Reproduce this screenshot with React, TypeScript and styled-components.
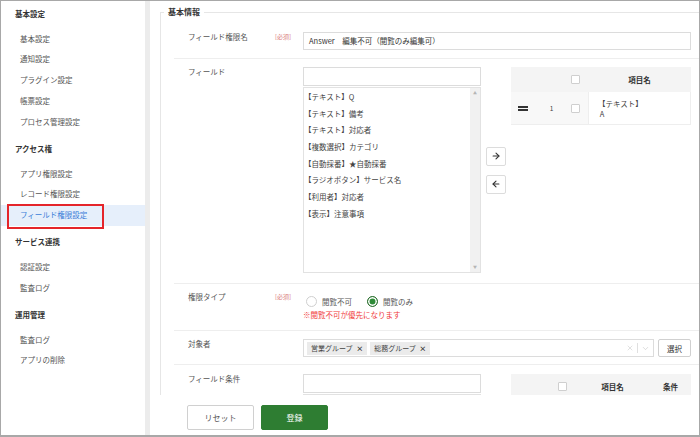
import styled, { createGlobalStyle } from "styled-components";
import { ArrowLeft, ArrowRight, ChevronDown, X } from "lucide-react";

const GlobalStyle = createGlobalStyle`
  html, body {
    margin: 0;
    padding: 0;
    background: #fff;
  }

  body {
    font-family: "Noto Sans CJK JP", "Noto Sans", sans-serif;
    font-size: 7.5px;
    color: #555;
  }

  * {
    box-sizing: border-box;
  }
`;

const NAV = [
  { title: "基本設定", items: ["基本設定", "通知設定", "プラグイン設定", "帳票設定", "プロセス管理設定"] },
  { title: "アクセス権", items: ["アプリ権限設定", "レコード権限設定", "フィールド権限設定"] },
  { title: "サービス連携", items: ["認証設定", "監査ログ"] },
  { title: "運用管理", items: ["監査ログ", "アプリの削除"] },
];

const FIELDS = [
  "【テキスト】Q",
  "【テキスト】備考",
  "【テキスト】対応者",
  "【複数選択】カテゴリ",
  "【自動採番】★自動採番",
  "【ラジオボタン】サービス名",
  "【利用者】対応者",
  "【表示】注意事項",
];

const ACTIVE = "フィールド権限設定";

export default function App() {
  return (
    <>
      <GlobalStyle />
      <Frame>
        <Sidebar>
          {NAV.map((section) => (
            <NavSection key={section.title}>
              <NavTitle>{section.title}</NavTitle>
              {section.items.map((item) => (
                <NavItem key={item} $active={item === ACTIVE}>
                  {item}
                  {item === ACTIVE && <Highlight />}
                </NavItem>
              ))}
            </NavSection>
          ))}
        </Sidebar>
        <Gutter />
        <Main>
          <ScrollArea>
            <Fieldset>
              <Legend>基本情報</Legend>

              <FormRow>
                <Label>フィールド権限名</Label>
                <Required>[必須]</Required>
                <TextInput>Answer　編集不可（閲覧のみ編集可）</TextInput>
              </FormRow>

              <FormRow $pb={10}>
                <Label>フィールド</Label>
                <span />
                <PickerGrid>
                  <ListColumn>
                    <TextInput />
                    <ListBox>
                      <ListItems>
                        {FIELDS.map((f) => (
                          <ListItem key={f}>{f}</ListItem>
                        ))}
                      </ListItems>
                      <ScrollTrack>
                        <ScrollArrow>▲</ScrollArrow>
                        <ScrollArrow>▼</ScrollArrow>
                      </ScrollTrack>
                    </ListBox>
                  </ListColumn>
                  <ArrowColumn>
                    <ArrowButton>
                      <ArrowRight size={10} strokeWidth={2.6} />
                    </ArrowButton>
                    <ArrowButton>
                      <ArrowLeft size={10} strokeWidth={2.6} />
                    </ArrowButton>
                  </ArrowColumn>
                  <Table>
                    <TableHead $cols="29px 23px 25px 1fr">
                      <span />
                      <span />
                      <Cell>
                        <Checkbox />
                      </Cell>
                      <HeadText>項目名</HeadText>
                    </TableHead>
                    <TableRow>
                      <Cell $muted>
                        <Handle />
                      </Cell>
                      <Cell $muted>1</Cell>
                      <Cell $muted>
                        <Checkbox />
                      </Cell>
                      <NameCell>
                        【テキスト】
                        <br />
                        &nbsp;A
                      </NameCell>
                    </TableRow>
                  </Table>
                </PickerGrid>
              </FormRow>

              <FormRow $pb={10}>
                <Label>権限タイプ</Label>
                <Required>[必須]</Required>
                <div>
                  <RadioGroup>
                    <RadioOption>
                      <Radio />
                      閲覧不可
                    </RadioOption>
                    <RadioOption>
                      <Radio $checked />
                      閲覧のみ
                    </RadioOption>
                  </RadioGroup>
                  <Note>※閲覧不可が優先になります</Note>
                </div>
              </FormRow>

              <FormRow $pb={7}>
                <Label>対象者</Label>
                <span />
                <SelectRow>
                  <MultiSelect>
                    <Tags>
                      <Tag>
                        営業グループ <TagX>×</TagX>
                      </Tag>
                      <Tag>
                        総務グループ <TagX>×</TagX>
                      </Tag>
                    </Tags>
                    <Indicators>
                      <X size={8} strokeWidth={1.5} />
                      <IndicatorSep />
                      <ChevronDown size={9} strokeWidth={1.5} />
                    </Indicators>
                  </MultiSelect>
                  <SmallButton>選択</SmallButton>
                </SelectRow>
              </FormRow>

              <FormRow $pt={9}>
                <Label>フィールド条件</Label>
                <span />
                <PickerGrid>
                  <ListColumn>
                    <TextInput />
                    <ListBox>
                      <ListItems />
                      <ScrollTrack />
                    </ListBox>
                  </ListColumn>
                  <span />
                  <Table>
                    <TableHead $cols="39px 25px 75px 1fr">
                      <span />
                      <Cell>
                        <Checkbox />
                      </Cell>
                      <HeadText>項目名</HeadText>
                      <HeadText>条件</HeadText>
                    </TableHead>
                  </Table>
                </PickerGrid>
              </FormRow>
            </Fieldset>
          </ScrollArea>
          <Footer>
            <FooterButton>リセット</FooterButton>
            <FooterButton $primary>登録</FooterButton>
          </Footer>
        </Main>
      </Frame>
    </>
  );
}

const Frame = styled.div`
  display: flex;
  width: 700px;
  height: 437px;
  border: 1px solid #a8a8a8;
  border-bottom-width: 2px;
  overflow: hidden;
  background: #fff;
`;

const Sidebar = styled.nav`
  width: 144px;
  flex-shrink: 0;
  padding-top: 3px;
`;

const NavSection = styled.div`
  & + & {
    margin-top: 6.5px;
  }
`;

const NavTitle = styled.div`
  height: 20px;
  line-height: 20px;
  padding-left: 14px;
  margin-bottom: 4.8px;
  font-weight: 700;
  color: #333;
`;

const NavItem = styled.div<{ $active?: boolean }>`
  position: relative;
  height: 20.7px;
  line-height: 20.7px;
  padding-left: 19px;
  color: ${({ $active }) => ($active ? "#3b7dd8" : "#555")};
  background: ${({ $active }) => ($active ? "#e6effb" : "transparent")};
`;

const Highlight = styled.span`
  position: absolute;
  left: 6px;
  top: -1px;
  width: 97px;
  height: 25px;
  border: 2px solid #e5252a;
`;

const Gutter = styled.div`
  width: 5px;
  flex-shrink: 0;
  background: #ececec;
`;

const Main = styled.main`
  flex: 1;
  min-width: 0;
  display: flex;
  flex-direction: column;
`;

const ScrollArea = styled.div`
  height: 394px;
  overflow: hidden;
  padding-left: 10px;
`;

const Fieldset = styled.fieldset`
  margin: 5px 0 0;
  padding: 6px 0 0;
  border: 1px solid #e6e6e6;
  border-right: none;
  min-width: 0;
`;

const Legend = styled.legend`
  margin-left: 3px;
  padding: 0 4px;
  font-size: 8px;
  line-height: 12px;
  font-weight: 700;
  color: #333;
`;

const FormRow = styled.div<{ $pt?: number; $pb?: number }>`
  display: grid;
  grid-template-columns: 87px 28px 1fr;
  align-items: start;
  margin-left: 13px;
  padding: ${({ $pt = 8 }) => $pt}px 8px ${({ $pb = 8 }) => $pb}px 14px;
  border-bottom: 1px solid #eeeeee;
`;

const Label = styled.div`
  line-height: 10px;
  color: #555;
`;

const Required = styled.div`
  font-size: 6px;
  line-height: 10px;
  color: #d97a7a;
`;

const TextInput = styled.div`
  height: 18px;
  line-height: 16px;
  padding: 0 5px;
  border: 1px solid #dcdcdc;
  color: #333;
  background: #fff;
`;

const PickerGrid = styled.div`
  display: grid;
  grid-template-columns: 178px 30px 1fr;
`;

const ListColumn = styled.div`
  display: flex;
  flex-direction: column;
  gap: 1px;

  & > ${TextInput} {
    height: 19px;
  }
`;

const ListBox = styled.div`
  display: flex;
  height: 186px;
  border: 1px solid #e2e2e2;
`;

const ListItems = styled.div`
  flex: 1;
  padding-top: 1px;
`;

const ListItem = styled.div`
  height: 16.67px;
  line-height: 16.67px;
  padding-left: 0;
  color: #444;
  white-space: nowrap;
`;

const ScrollTrack = styled.div`
  width: 10px;
  display: flex;
  flex-direction: column;
  justify-content: space-between;
  align-items: center;
  padding: 2px 0;
  background: #f1f1f1;
`;

const ScrollArrow = styled.span`
  font-size: 4px;
  line-height: 6px;
  color: #b5b5b5;
`;

const ArrowColumn = styled.div`
  display: flex;
  flex-direction: column;
  justify-content: center;
  align-items: center;
  gap: 9px;
`;

const ArrowButton = styled.button`
  width: 20px;
  height: 19px;
  padding: 0;
  display: flex;
  align-items: center;
  justify-content: center;
  border: 1px solid #dcdcdc;
  border-radius: 2px;
  background: #fff;
  color: #333;
`;

const Table = styled.div`
  display: flex;
  flex-direction: column;
  align-self: start;
`;

const TableHead = styled.div<{ $cols: string }>`
  display: grid;
  grid-template-columns: ${({ $cols }) => $cols};
  height: 25px;
  align-items: center;
  background: #f4f4f4;
`;

const HeadText = styled.div`
  text-align: center;
  font-weight: 700;
  color: #333;
`;

const TableRow = styled.div`
  display: grid;
  grid-template-columns: 29px 23px 25px 1fr;
  height: 33px;
  border-bottom: 1px solid #eeeeee;
`;

const Cell = styled.div<{ $muted?: boolean }>`
  display: flex;
  align-items: center;
  justify-content: center;
  height: 100%;
  font-size: 6.5px;
  color: #444;
  background: ${({ $muted }) => ($muted ? "#f8f8f8" : "transparent")};
`;

const NameCell = styled.div`
  padding: 7px 0 0 9px;
  line-height: 10px;
  color: #444;
  border-left: 1px solid #eeeeee;
  border-right: 1px solid #eeeeee;
`;

const Checkbox = styled.span`
  display: block;
  width: 9px;
  height: 9px;
  border: 1px solid #cfcfcf;
  border-radius: 1px;
  background: #fff;
`;

const Handle = styled.span`
  display: block;
  width: 10px;
  height: 5px;
  border-top: 2px solid #333;
  border-bottom: 2px solid #333;
  margin-right: 6px;
`;

const RadioGroup = styled.div`
  display: flex;
  align-items: center;
  gap: 15px;
  height: 18px;
  padding-left: 3px;
`;

const RadioOption = styled.label`
  display: flex;
  align-items: center;
  gap: 5px;
  color: #555;
`;

const Radio = styled.span<{ $checked?: boolean }>`
  display: block;
  width: 11px;
  height: 11px;
  border-radius: 50%;
  border: 1px solid ${({ $checked }) => ($checked ? "#2f6f31" : "#cfcfcf")};
  background: ${({ $checked }) => ($checked ? "#2e8b37" : "#fff")};
  box-shadow: ${({ $checked }) => ($checked ? "inset 0 0 0 1.5px #fff" : "none")};
`;

const Note = styled.div`
  margin-top: 0;
  line-height: 10px;
  color: #f03a3a;
`;

const SelectRow = styled.div`
  display: flex;
  gap: 4px;
`;

const MultiSelect = styled.div`
  flex: 1;
  height: 18px;
  display: flex;
  align-items: center;
  justify-content: space-between;
  padding: 0 3px;
  border: 1px solid #dcdcdc;
`;

const Tags = styled.div`
  display: flex;
  gap: 3px;
`;

const Tag = styled.span`
  height: 13px;
  line-height: 13px;
  padding: 0 4px;
  font-size: 7px;
  background: #ebebeb;
  color: #444;
`;

const TagX = styled.span`
  margin-left: 2px;
  font-weight: 700;
  color: #333;
`;

const Indicators = styled.div`
  display: flex;
  align-items: center;
  gap: 3px;
  color: #c2c2c2;
`;

const IndicatorSep = styled.span`
  width: 1px;
  height: 10px;
  background: #e0e0e0;
`;

const SmallButton = styled.button`
  width: 33px;
  height: 18px;
  padding: 0;
  border: 1px solid #d0d0d0;
  border-radius: 2px;
  background: #fff;
  font-family: inherit;
  font-size: 7.5px;
  color: #333;
`;

const Footer = styled.footer`
  flex: 1;
  display: flex;
  align-items: flex-start;
  gap: 7px;
  padding: 10px 0 0 37px;
`;

const FooterButton = styled.button<{ $primary?: boolean }>`
  width: 67px;
  height: 25px;
  padding: 0;
  border: 1px solid ${({ $primary }) => ($primary ? "#2e7d32" : "#d0d0d0")};
  border-radius: 2px;
  background: ${({ $primary }) => ($primary ? "#2e7d32" : "#fff")};
  font-family: inherit;
  font-size: 8px;
  color: ${({ $primary }) => ($primary ? "#fff" : "#555")};
`;
